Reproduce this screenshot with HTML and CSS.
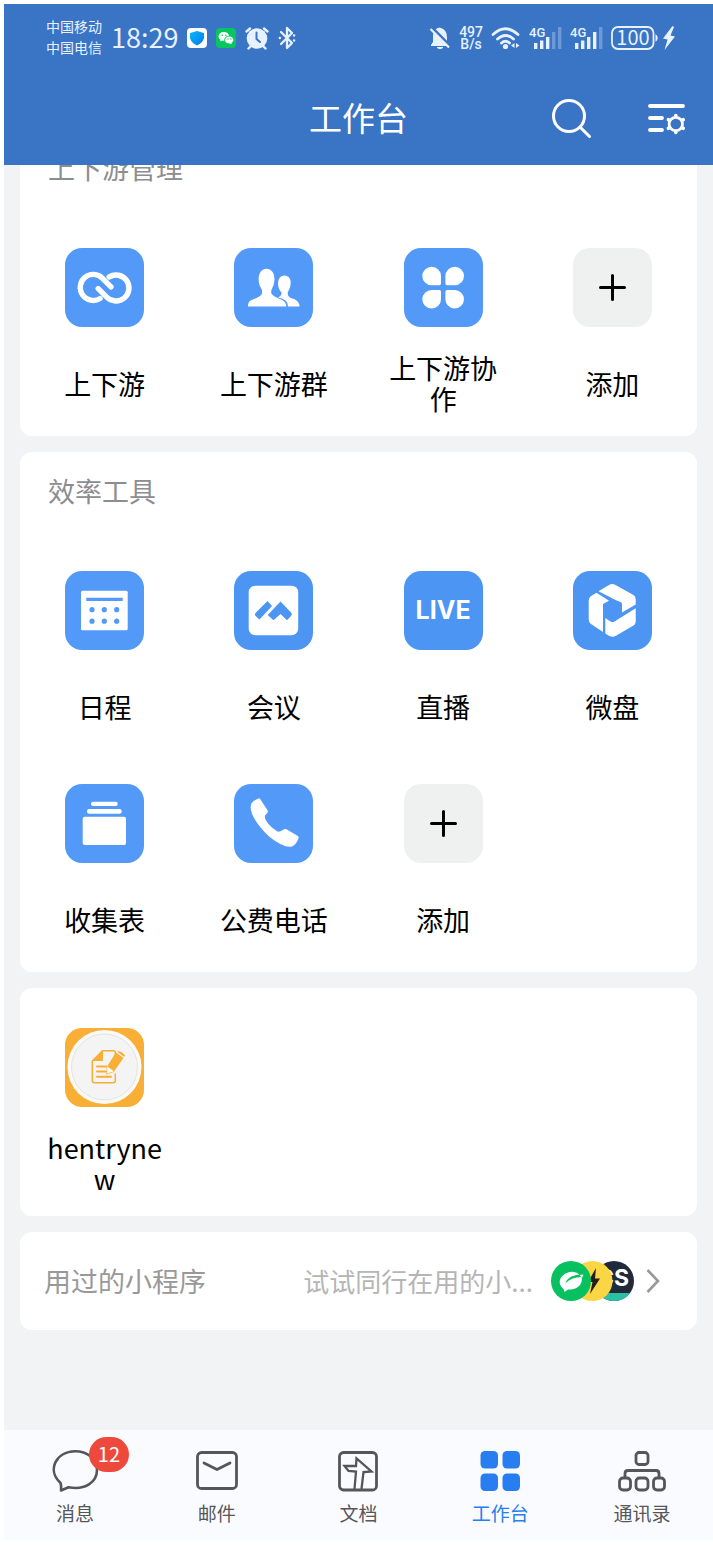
FILE: index.html
```
<!DOCTYPE html>
<html lang="zh-CN">
<head>
<meta charset="utf-8">
<meta name="viewport" content="width=device-width, initial-scale=1">
<title>工作台</title>
<link rel="stylesheet" href="styles.css">
</head>
<body>
<div class="app">
  <header class="header">
    <div class="status">
      <div class="status-group status-left">
        <div class="carriers"><span>中国移动</span><span>中国电信</span></div>
        <time class="clock">18:29</time>
        <svg width="20" height="20" viewBox="0 0 20 20"><defs><linearGradient id="shield" x2="1" y2="1"><stop offset="0" stop-color="#08b8fb"/><stop offset="1" stop-color="#0879ee"/></linearGradient></defs><rect width="20" height="20" rx="4" fill="#fff"/><path d="M10 3 L17 5 V10 Q16 15 10 17.500 Q4 15 3 10 V5Z" fill="url(#shield)"/></svg>
        <svg width="20" height="20" viewBox="0 0 20 20"><rect width="20" height="20" rx="4" fill="#07c65f"/><path d="M8 4C4.800 4 2.600 6 2.600 8.500C2.600 10 3.400 11.100 4.600 11.900L4.200 13.500L6.200 12.500Q7.200 12.800 8.300 12.700C8 9.500 10.300 7.700 13.200 7.700C12.600 5.500 10.600 4 8 4Z" fill="#fff"/><path d="M13.200 8.400C10.700 8.400 9 10 9 12C9 14.200 11.100 15.700 14 15.400L15.700 16.200L15.400 14.800C16.700 14 17.400 13.100 17.400 12C17.400 10 15.600 8.400 13.200 8.400Z" fill="#fff"/><g fill="#07c65f"><circle cx="6.300" cy="7.300" r=".8"/><circle cx="9.800" cy="7.300" r=".8"/><circle cx="12" cy="11" r=".7"/><circle cx="14.900" cy="11" r=".7"/></g></svg>
        <svg width="24" height="24" viewBox="0 0 24 24" fill="none" stroke="#e8f1ff" stroke-width="2.400" stroke-linecap="round"><path d="M1.500 5.500L5 2.500M22.500 5.500L19 2.500M3.500 22.500L6 20M20.500 22.500L18 20"/><circle cx="12" cy="12.500" r="10.300" fill="#e8f1ff" stroke="none"/><path d="M11.500 6.500V13L15 16" stroke="#3974c5" stroke-width="2"/></svg>
        <svg width="18" height="24" viewBox="0 0 18 24" fill="none" stroke="#e8f1ff" stroke-width="2.300" stroke-linejoin="round" stroke-linecap="round"><path d="M3 6L14 17L9 22V2L14 7L3 18"/><path d="M1.800 12H2M16 9.500H16.200M16 14.500H16.200"/></svg>
      </div>
      <div class="status-group">
        <svg width="22" height="24" viewBox="0 0 22 24"><path d="M10.500 1.500Q18 3 18 11V16L20 19V20H2V19L4 16V10Q4 3 10.500 1.500Z" fill="#e8f1ff"/><path d="M8 21.500H14Q11 24 8 21.500" fill="#e8f1ff" stroke="#e8f1ff"/><path d="M3 1.500L22 20.500" stroke="#3974c5" stroke-width="2.500"/><path d="M1.500 3L20 21.500" stroke="#e8f1ff" stroke-width="2.200"/></svg>
        <div class="speed"><span>497</span><span>B/s</span></div>
        <svg width="30" height="24" viewBox="0 0 30 24" fill="none" stroke="#e8f1ff" stroke-width="2.800" stroke-linecap="round"><path d="M2 8.500Q14.500-3 27 8.500M6.500 13Q14.500 6 22.500 13M10.500 17Q14.500 13.500 18.500 17"/><circle cx="14.500" cy="20.500" r="2.600" fill="#e8f1ff" stroke="none"/><path d="M23.500 17V22L20 19.500ZM25 17V22L28.500 19.500Z" fill="#e8f1ff" stroke="none"/></svg>
        <svg class="signal" width="33" height="24" viewBox="0 0 33 24"><text x="0" y="11">4G</text><path d="M5 17h3.400v6H5zM11 14.500h3.400V23H11zM17 11h3.400v12H17z"/><path opacity=".3" d="M23 6h3.400v17H23zM29 1h3.400v22H29z"/></svg>
        <svg class="signal" width="33" height="24" viewBox="0 0 33 24"><text x="0" y="11">4G</text><path d="M5 17h3.400v6H5zM11 14.500h3.400V23H11zM17 11h3.400v12H17zM23 6h3.400v17H23z"/><path opacity=".3" d="M29 1h3.400v22H29z"/></svg>
        <svg class="battery" width="48" height="24" viewBox="0 0 48 24"><rect x="1" y="1" width="41.500" height="22" rx="6" fill="none" stroke="#e8f1ff" stroke-width="1.800"/><text x="22" y="19" text-anchor="middle">100</text><path d="M44.500 8Q49 12 44.500 16Z"/></svg>
        <svg width="12" height="24" viewBox="0 0 12 24"><path d="M9.500 0L0 12.500L4.500 13.500L1.500 24L12 10.500L7.500 9.500L11 1Z" fill="#e8f1ff"/></svg>
      </div>
    </div>
    <div class="titlebar">
      <h1 class="title">工作台</h1>
      <div class="actions">
        <button class="icon-btn" aria-label="搜索"><svg width="40" height="42" viewBox="0 0 40 42" fill="none" stroke="#fff" stroke-width="3" stroke-linecap="round"><circle cx="17" cy="18" r="15.500"/><path d="M28 29L37.500 38.500"/></svg></button>
        <button class="icon-btn" aria-label="管理工作台"><svg width="39" height="34" viewBox="0 0 39 34" fill="none" stroke="#fff" stroke-width="3.800" stroke-linecap="round"><path d="M2 4H35M2 16H14M2 28H14"/><circle cx="27.800" cy="22" r="6.700" stroke-width="2.800"/><path d="M27.800 14V13.500M27.800 30V30.500M34.700 18L35.200 17.700M34.700 26L35.200 26.300M20.900 18L20.400 17.700M20.900 26L20.400 26.300" stroke-width="3.600"/></svg></button>
      </div>
    </div>
  </header>

  <main class="content">
    <section class="card card-scrolled">
      <h2 class="card-title">上下游管理</h2>
      <div class="grid">
        <a class="item" href="#"><span class="tile"><svg viewBox="0 0 79 79" fill="none" stroke="#fff" stroke-width="5.400" stroke-linecap="round"><path d="M35 50.500A13 13 0 1 1 37.600 30.400L46 38.800"/><path d="M44.200 28.900A13 13 0 1 1 41.600 49L33.200 40.600"/></svg></span><span class="label">上下游</span></a>
        <a class="item" href="#"><span class="tile"><svg viewBox="0 0 79 79" fill="#fff"><path d="M44 49.500Q48 47.500 47.500 44.500C43 40 42 28 50.500 27.500C59 28 57.500 39 53.800 44Q53 48 57 50Q65.500 52 65.500 58.500H54Q54.500 51.500 44 49.500Z"/><path d="M14 58.500Q13.500 52.500 20 51Q28 48 28 45Q28.500 42 27 40C23 34 23.500 21 32.500 20.700C41.500 21 42 33 38.300 40Q36.500 43 37.500 45.500Q38.500 48 46 51Q52.500 53.500 52.300 58.500Z"/></svg></span><span class="label">上下游群</span></a>
        <a class="item" href="#"><span class="tile"><svg viewBox="0 0 79 79" fill="#fff"><path d="M27.600 18.700A9.300 9.300 0 0 1 37 28V35.500Q37 37.300 35.200 37.300H27.600A9.300 9.300 0 0 1 27.600 18.700Z"/><path d="M50.700 18.700A9.300 9.300 0 0 0 41.400 28V35.500Q41.400 37.300 43.200 37.300H50.700A9.300 9.300 0 0 0 50.700 18.700Z"/><path d="M27.600 60.500A9.300 9.300 0 0 0 37 51.200V43.700Q37 41.900 35.200 41.900H27.600A9.300 9.300 0 0 0 27.600 60.500Z"/><path d="M50.700 60.500A9.300 9.300 0 0 1 41.400 51.200V43.700Q41.400 41.900 43.200 41.900H50.700A9.300 9.300 0 0 1 50.700 60.500Z"/></svg></span><span class="label">上下游协作</span></a>
        <button class="item"><span class="tile tile-add"><svg viewBox="0 0 79 79" stroke="#000" stroke-width="3" stroke-linecap="round"><path d="M27.500 39.500H51.500M39.500 27.500V51.500"/></svg></span><span class="label">添加</span></button>
      </div>
    </section>

    <section class="card">
      <h2 class="card-title">效率工具</h2>
      <div class="grid">
        <a class="item" href="#"><span class="tile"><svg viewBox="0 0 79 79" fill="#5299f8"><rect x="16" y="19.700" width="46.700" height="39.600" rx="1.500" fill="#fff"/><path d="M21.300 26.700h36.400v3.200H21.300z"/><circle cx="27" cy="38.700" r="2.600"/><circle cx="39.300" cy="38.700" r="2.600"/><circle cx="51.700" cy="38.700" r="2.600"/><circle cx="27" cy="50.200" r="2.600"/><circle cx="39.300" cy="50.200" r="2.600"/><circle cx="51.700" cy="50.200" r="2.600"/></svg></span><span class="label">日程</span></a>
        <a class="item" href="#"><span class="tile tile-deep"><svg viewBox="0 0 79 79"><rect x="14.700" y="14.700" width="49.500" height="49.500" rx="6.500" fill="#fff"/><path d="M33.500 30L38 35L25.500 48.500Q24 47.500 21.200 44.500Q20.500 43 21.500 42ZM46.500 30.500L57.500 42Q58.500 43.500 57 45L53 49.300L46.500 43L39.500 49.300L33.700 44Z" fill="#4c95f2"/></svg></span><span class="label">会议</span></a>
        <a class="item" href="#"><span class="tile tile-deep"><span class="live">LIVE</span></span><span class="label">直播</span></a>
        <a class="item" href="#"><span class="tile tile-deep"><svg viewBox="0 0 79 79" fill="#fff"><path d="M25.500 20.300L36 14Q39.300 12 42.500 14L60.500 24Q62.700 25.500 62.700 28V33.500L49 41.500V33Q49 31.500 47.500 31L43 29.300Z"/><path d="M23.500 21.700L36 29.700L30 33V61L18 53Q15.700 51.500 15.700 48.500V29.500Q15.700 26.500 18 25Z"/><path d="M32.300 47L37.500 50.500Q39.500 51.500 41.500 50.500L62.700 37.200V50.500Q62.700 53 60.500 54.500L43 64.700Q39.500 66.700 36 64.700L32.300 62.500Z"/></svg></span><span class="label">微盘</span></a>
        <a class="item" href="#"><span class="tile"><svg viewBox="0 0 79 79" fill="#fff"><rect x="26" y="17.700" width="26.700" height="4.300" rx="2"/><rect x="22" y="25" width="34.700" height="4.700" rx="2.200"/><rect x="17.700" y="32.700" width="43.300" height="28.300" rx="2"/></svg></span><span class="label">收集表</span></a>
        <a class="item" href="#"><span class="tile"><svg viewBox="0 0 79 79" fill="#fff"><path d="M17.300 19.500Q20 16 25 14.300L26 14.700L33.700 26.500V28.500L31 31.500Q30.500 34 32 36.500Q36 43 44 47.800L46.500 47.300L50.500 45L52 45L64.300 52.300L64.700 53.700Q62.500 60.500 58 62.500Q50 64.500 35 52.500Q17 35 16.600 23Z"/></svg></span><span class="label">公费电话</span></a>
        <button class="item"><span class="tile tile-add"><svg viewBox="0 0 79 79" stroke="#000" stroke-width="3" stroke-linecap="round"><path d="M27.500 39.500H51.500M39.500 27.500V51.500"/></svg></span><span class="label">添加</span></button>
      </div>
    </section>

    <section class="card card-untitled">
      <div class="grid">
        <a class="item" href="#"><span class="tile tile-orange"><svg viewBox="0 0 79 79"><circle cx="39.500" cy="39" r="37" fill="#faf9f5"/><circle cx="39.500" cy="39" r="33" fill="#f4f4f5" stroke="#e3e3e5"/><g fill="none" stroke="#f9ae35" stroke-linecap="round" stroke-linejoin="round"><path d="M50.300 31V23.500L48.500 22.800H37.500L27.300 33V52.500Q27.300 54.700 29.500 54.700H48Q50.300 54.700 50.300 52.500V46" stroke-width="1.500"/><path d="M37.500 23V32.500H28Z" fill="#f9ae35" stroke-width="1"/><path d="M32 38.500H41M32 43.500H41M32 48.800H46" stroke-width="2"/></g><path d="M51 24.500L58.500 30L49 43.500L42 38.500Z" fill="#f9ae35"/><path d="M52 23.500Q54 22.500 57 24.500Q60.500 27 59.700 28L59 29Z" fill="#f9ae35"/><path d="M42 38.500L41.700 46.300L49 43.500" fill="#fff" stroke="#f9ae35" stroke-width=".8"/></svg></span><span class="label">hentrynew</span></a>
      </div>
    </section>

    <a class="card mini" href="#">
      <span class="mini-title">用过的小程序</span>
      <span class="mini-hint">试试同行在用的小...</span>
      <svg class="mini-apps" width="83" height="40" viewBox="0 0 83 40">
        <defs><clipPath id="cs"><circle cx="63" cy="20" r="20"/></clipPath></defs>
        <g clip-path="url(#cs)"><rect x="43" width="40" height="40" fill="#202a3b"/><rect x="43" y="32" width="40" height="8" fill="#2bc0a5"/><text class="cs" x="46" y="25">CS</text></g>
        <circle cx="41.500" cy="20" r="20" fill="#fbd644"/><path d="M45 7L37 21H41.500L39 33L49 17.500H44Z" fill="#231f1a"/>
        <circle cx="20" cy="20" r="20" fill="#07c160"/>
        <path d="M12.500 28C6 23 8 14.500 17 11.500Q24 9.500 28.500 13.500C20 14.500 15.500 18 14.500 22.500C19 17.500 24 16.500 30.500 16C32.500 23 26 29.500 17 28.500L13.500 31Z" fill="#fff"/><path d="M28.500 14L32.500 13.500L31 17Z" fill="#fff"/>
      </svg>
      <svg width="14" height="24" viewBox="0 0 14 24" fill="none" stroke="#999" stroke-width="2.600"><path d="M1.500 1L12 12L1.500 23"/></svg>
    </a>
  </main>

  <nav class="tabbar">
    <a class="tab" href="#"><span class="tab-icon"><svg width="48" height="42" viewBox="0 0 48 42" fill="none" stroke="#555659" stroke-width="2.600" stroke-linejoin="round"><path d="M9.500 33C-4.500 20 5 1.500 24 1.300C36 1.300 46 8.500 46 20C46 32 34 40.500 17.500 37.200L10 40.500Q10.500 36 9.500 33Z"/></svg><span class="badge">12</span></span><span>消息</span></a>
    <a class="tab" href="#"><span class="tab-icon"><svg width="48" height="42" viewBox="0 0 48 42" fill="none" stroke="#555659" stroke-width="2.800" stroke-linecap="round" stroke-linejoin="round"><rect x="4.500" y="2.500" width="39" height="36" rx="4"/><path d="M11 13L24 19.500L37 13"/></svg></span><span>邮件</span></a>
    <a class="tab" href="#"><span class="tab-icon"><svg width="48" height="42" viewBox="0 0 48 42" fill="none" stroke="#555659" stroke-width="2.800"><rect x="5.500" y="2.500" width="37" height="37.500" rx="4"/><path d="M20.500 39L22 21.500L14.500 21L10.500 16L22 16L22.500 8.500L37.500 21.500L29.500 22L27.500 39" stroke-width="2.300"/></svg></span><span>文档</span></a>
    <a class="tab tab-active" href="#" aria-current="page"><span class="tab-icon"><svg width="48" height="42" viewBox="0 0 48 42" fill="#267ef0"><rect x="4.500" y="1" width="17.500" height="17.500" rx="4.500"/><rect x="26.500" y="1" width="17.500" height="17.500" rx="4.500"/><rect x="4.500" y="23.500" width="17.500" height="17.500" rx="4.500"/><rect x="26.500" y="23.500" width="17.500" height="17.500" rx="4.500"/></svg></span><span>工作台</span></a>
    <a class="tab" href="#"><span class="tab-icon"><svg width="48" height="42" viewBox="0 0 48 42" fill="none" stroke="#555659" stroke-width="2.800"><rect x="18" y="2.500" width="12" height="12" rx="3"/><rect x="1.500" y="28" width="11" height="12" rx="3.500"/><rect x="18" y="28" width="12" height="12" rx="3.500"/><rect x="35.500" y="28" width="11" height="12" rx="3.500"/><path d="M7 28V23.500Q7 20.500 10 20.500H38Q41 20.500 41 23.500V28"/></svg></span><span>通讯录</span></a>
  </nav>
</div>
</body>
</html>
```
FILE: styles.css
```
* { box-sizing: border-box; }

body {
  margin: 0;
  padding: 4px 0 5px 4px;
  background: #fff;
  color: #000;
  font-family: "Noto Sans CJK SC", sans-serif;
}

a { color: inherit; text-decoration: none; }

button {
  padding: 0;
  border: 0;
  background: none;
  color: inherit;
  font: inherit;
  cursor: pointer;
}

svg { display: block; flex: none; }

.app {
  display: flex;
  flex-direction: column;
  min-height: calc(100vh - 9px);
  background: #f2f3f5;
}

/* Header */
.header { background: #3974c5; color: #fff; }

.status {
  display: flex;
  justify-content: space-between;
  align-items: center;
  height: 68px;
  padding: 0 38px 0 42px;
  color: #e8f1ff;
}

.status-group { display: flex; align-items: center; gap: 8px; }
.status-left { gap: 9px; }

.carriers {
  display: flex;
  flex-direction: column;
  padding-bottom: 2px;
  font-size: 14px;
  line-height: 21px;
}

.clock { padding-bottom: 2px; font-size: 27px; line-height: 28px; }

.speed {
  display: flex;
  flex-direction: column;
  font: 500 14px/12px Roboto, sans-serif;
  text-align: center;
}

.signal, .battery { fill: #e8f1ff; }
.signal text { font: 500 13px Roboto, sans-serif; }
.battery { margin-right: -4px; }
.battery text { font: 400 20px "Noto Sans CJK SC", sans-serif; }

.titlebar {
  display: grid;
  grid-template-columns: 1fr auto 1fr;
  align-items: center;
  height: 93px;
  padding: 0 26px;
}

.title {
  grid-column: 2;
  margin: 0;
  padding-bottom: 4px;
  font-size: 33px;
  font-weight: 400;
  line-height: 40px;
}

.actions {
  display: flex;
  justify-content: flex-end;
  align-items: center;
  gap: 56px;
}

/* Cards */
.content {
  display: flex;
  flex: 1;
  flex-direction: column;
  gap: 16px;
  padding: 0 16px 16px;
  overflow: hidden;
}

.card {
  padding: 20px 0 22px;
  border-radius: 12px;
  background: #fff;
}

.card-scrolled { margin-top: -36px; }
.card-untitled { padding-top: 40px; }

.card-title {
  margin: 0 0 61px;
  padding: 0 28px;
  color: #8b8d90;
  font-size: 27px;
  font-weight: 400;
  line-height: 38px;
}

.grid {
  display: grid;
  grid-template-columns: repeat(4, 1fr);
  row-gap: 47px;
}

.item {
  display: flex;
  flex-direction: column;
  align-items: center;
  gap: 25px;
}

.tile {
  display: flex;
  justify-content: center;
  align-items: center;
  width: 79px;
  height: 79px;
  border-radius: 17px;
  background: #5299f8;
  overflow: hidden;
}

.tile svg { width: 100%; height: 100%; }
.tile-deep { background: #4c95f2; }
.tile-add { background: #eff0f0; }
.tile-orange { background: #f9ae35; }

.live { padding-bottom: 2px; color: #fff; font: 700 25px/30px Inter, sans-serif; }

.label {
  display: flex;
  justify-content: center;
  align-items: center;
  width: 118px;
  height: 62px;
  font-size: 27px;
  line-height: 31px;
  text-align: center;
  word-break: break-all;
}

/* Recently used mini programs */
.mini {
  display: flex;
  align-items: center;
  height: 98px;
  padding: 0 37px 0 24px;
}

.mini-title {
  flex: 1;
  padding-bottom: 2px;
  color: #999;
  font-size: 27px;
}

.mini-hint { padding-bottom: 2px; color: #b5b5b5; font-size: 26px; }
.mini-apps { margin: 0 12px 0 18px; }
.cs { fill: #fff; font: 700 23px Inter, sans-serif; }

/* Bottom tabs */
.tabbar {
  display: grid;
  grid-template-columns: repeat(5, 1fr);
  height: 110px;
  padding-top: 20px;
  background: #fafbfe;
}

.tab {
  display: flex;
  flex-direction: column;
  align-items: center;
  gap: 7px;
  color: #555659;
  font-size: 19px;
  line-height: 28px;
}

.tab-active { color: #267ef0; }
.tab-icon { position: relative; }

.badge {
  position: absolute;
  top: -13px;
  left: 38px;
  width: 40px;
  height: 35px;
  border-radius: 18px;
  background: #ed4a3d;
  color: #fff;
  font-size: 20px;
  line-height: 34px;
  text-align: center;
}
```
